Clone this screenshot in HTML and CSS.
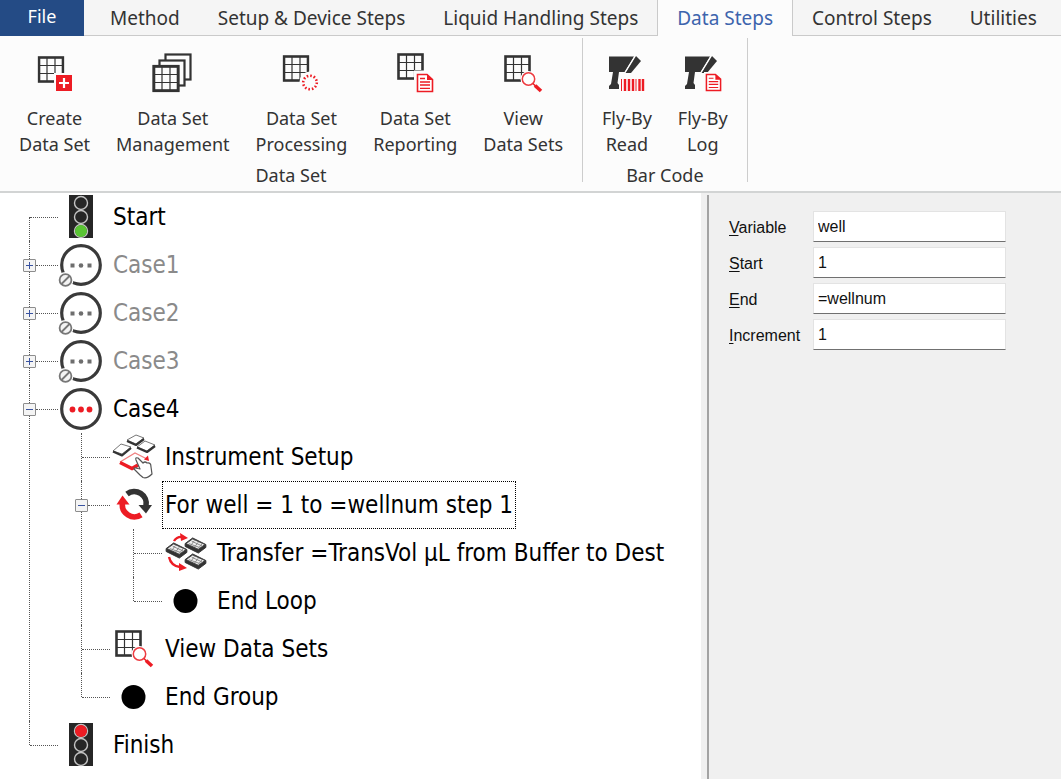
FILE: index.html
```html
<!DOCTYPE html>
<html lang="en">
<head>
<meta charset="utf-8">
<title>Method Editor</title>
<link rel="stylesheet" href="styles.css">
</head>
<body>
<svg class="sprite" aria-hidden="true">
  <defs>
    <symbol id="grid" viewBox="0 0 27 27">
      <path d="M9.500 2V25M17.500 2V25M2 9.500H25M2 17.500H25" fill="none" stroke="#333" stroke-width="1.200"/>
      <rect x="1.500" y="1.500" width="24" height="24" fill="none" stroke="#333" stroke-width="2.600"/>
    </symbol>
    <symbol id="doc" viewBox="0 0 18 20">
      <path d="M1.500 1.500H11L16.500 6.500V18.500H1.500Z" fill="#fff" stroke="#ed1c24" stroke-width="1.600"/>
      <path d="M11 1V7H17Z" fill="#ed1c24"/>
      <path d="M4 5.500H9M4 9H14M4 12H14M4 15.300H14" stroke="#ed1c24" stroke-width="1.300"/>
    </symbol>
    <symbol id="scanner" viewBox="0 0 44 44">
      <path d="M4 4.500H29L19.500 20H14L12.500 31L14 33V37H4V34L6 32L8 20H4Z" fill="#333"/>
      <path d="M31 4L36 9L26 21H20.500Z" fill="#333"/>
      <path d="M30 4L20 20.500" stroke="#fff" stroke-width="1"/>
    </symbol>
    <symbol id="view" viewBox="0 0 44 44">
      <use href="#grid" x="3" y="3" width="27" height="27"/>
      <circle cx="27.500" cy="27" r="8" fill="#fff"/>
      <circle cx="27.500" cy="27" r="6.200" fill="#fff" stroke="#ed3b40" stroke-width="1.500"/>
      <path d="M32 31.500L34.500 34" stroke="#ed1c24" stroke-width="1.500"/>
      <path d="M34 33.500L40 39" stroke="#ed1c24" stroke-width="3.600"/>
    </symbol>
    <symbol id="ring" viewBox="0 0 46 46">
      <circle cx="23" cy="23" r="19.300" fill="#fff" stroke="#3a3a3a" stroke-width="3.200"/>
    </symbol>
    <symbol id="case-off" viewBox="0 0 46 46">
      <use href="#ring" width="46" height="46"/>
      <g fill="#6e6e6e"><rect x="12.500" y="21.500" width="4" height="4"/><circle cx="23" cy="23.500" r="2.300"/><rect x="29.500" y="21.500" width="4" height="4"/></g>
      <circle cx="7.500" cy="38" r="8" fill="#fff"/>
      <circle cx="7.500" cy="38" r="5.900" fill="#f4f4f4" stroke="#777" stroke-width="1.800"/>
      <path d="M3.500 42L11.500 34" stroke="#777" stroke-width="1.800"/>
    </symbol>
    <symbol id="lamp" viewBox="0 0 46 46">
      <rect x="11" y="1" width="24" height="43" fill="#262626"/>
      <g fill="none" stroke="#c4c4c4" stroke-width="1.400"><circle cx="23" cy="9" r="6.500"/><circle cx="23" cy="23" r="6.500"/><circle cx="23" cy="37" r="6.500"/></g>
    </symbol>
    <symbol id="end" viewBox="0 0 46 46"><circle cx="23.500" cy="23" r="12" fill="#000"/></symbol>
    <symbol id="plate" viewBox="0 0 24 18">
      <path d="M1 7L9 1L23 8V11L15 17L1 10Z" fill="#333" stroke="#333" stroke-width="1"/>
      <path d="M2 7L9 2L22 8L15 13Z" fill="#eee" stroke="#444" stroke-width="1"/>
      <path d="M5 7L16 11M8 4.500L19 9.500M7 9L11 3.500M11 10.500L15 5.500M15 12L19 7" fill="none" stroke="#888" stroke-width="1"/>
    </symbol>
  </defs>
</svg>

<header class="ribbon">
  <nav class="tabs" aria-label="Ribbon">
    <button class="tab tab-file" type="button">File</button>
    <button class="tab" type="button">Method</button>
    <button class="tab" type="button">Setup &amp; Device Steps</button>
    <button class="tab" type="button">Liquid Handling Steps</button>
    <button class="tab tab-active" type="button" aria-current="page">Data Steps</button>
    <button class="tab" type="button">Control Steps</button>
    <button class="tab" type="button">Utilities</button>
    <span class="tabs-rest"></span>
  </nav>
  <div class="groups">
    <section class="group">
      <div class="tools">
        <button class="tool" type="button">
          <svg class="tool-icon" viewBox="0 0 44 44" aria-hidden="true">
            <use href="#grid" x="4.500" y="4" width="27" height="27"/>
            <rect x="21" y="21" width="20" height="20" fill="#fcfcfc"/>
            <rect x="23" y="23" width="16" height="16" fill="#ed1c24"/>
            <path d="M31 26V36M26 31H36" stroke="#fff" stroke-width="2.200"/>
          </svg>
          <span>Create<br>Data Set</span>
        </button>
        <button class="tool" type="button">
          <svg class="tool-icon" viewBox="0 0 44 44" aria-hidden="true">
            <g fill="#fcfcfc" stroke="#333" stroke-width="2.200"><rect x="14.500" y="2.500" width="25" height="25"/><rect x="8.500" y="8.500" width="25" height="25"/><rect x="2.500" y="14" width="25" height="25"/></g>
            <use href="#grid" x="1.500" y="13" width="27" height="27"/>
          </svg>
          <span>Data Set<br>Management</span>
        </button>
        <button class="tool" type="button">
          <svg class="tool-icon" viewBox="0 0 44 44" aria-hidden="true">
            <use href="#grid" x="3.500" y="3" width="27" height="27"/>
            <circle cx="31" cy="30" r="10.500" fill="#fcfcfc"/>
            <circle cx="31" cy="30.500" r="6.800" fill="none" stroke="#ed1c24" stroke-width="2.600" stroke-dasharray="1.600 1.960"/>
          </svg>
          <span>Data Set<br>Processing</span>
        </button>
        <button class="tool" type="button">
          <svg class="tool-icon" viewBox="0 0 44 44" aria-hidden="true">
            <use href="#grid" x="4" y="1" width="27" height="27"/>
            <rect x="21" y="18.500" width="14" height="14" fill="#fcfcfc"/>
            <use href="#doc" x="23" y="21" width="18" height="20"/>
          </svg>
          <span>Data Set<br>Reporting</span>
        </button>
        <button class="tool" type="button">
          <svg class="tool-icon" aria-hidden="true"><use href="#view"/></svg>
          <span>View<br>Data Sets</span>
        </button>
      </div>
      <h2 class="group-title">Data Set</h2>
    </section>
    <section class="group">
      <div class="tools">
        <button class="tool" type="button">
          <svg class="tool-icon" viewBox="0 0 44 44" aria-hidden="true">
            <use href="#scanner" width="44" height="44"/>
            <path d="M16.500 27V39M31 27V39" stroke="#ed1c24" stroke-width="1"/>
            <path d="M20 27V39M24 27V39M28 27V39M34.500 27V39M38 27V39" stroke="#ed1c24" stroke-width="2.400"/>
          </svg>
          <span>Fly-By<br>Read</span>
        </button>
        <button class="tool" type="button">
          <svg class="tool-icon" viewBox="0 0 44 44" aria-hidden="true">
            <use href="#scanner" width="44" height="44"/>
            <rect x="23" y="20" width="19" height="21" fill="#fcfcfc"/>
            <use href="#doc" x="24" y="21" width="17" height="19"/>
          </svg>
          <span>Fly-By<br>Log</span>
        </button>
      </div>
      <h2 class="group-title">Bar Code</h2>
    </section>
  </div>
</header>

<main class="workspace">
  <section class="tree-pane" aria-label="Method steps">
    <ul class="tree">
      <li class="node">
        <div class="row"><span class="gutter"></span>
          <svg class="step-icon" viewBox="0 0 46 46" aria-hidden="true"><use href="#lamp"/><circle cx="23" cy="37" r="6" fill="#5ac534"/></svg>
          <span class="label">Start</span></div>
      </li>
      <li class="node">
        <div class="row"><span class="gutter"><button class="toggle toggle-plus" type="button" aria-label="Expand Case1"></button></span>
          <svg class="step-icon" aria-hidden="true"><use href="#case-off"/></svg>
          <span class="label label-off">Case1</span></div>
      </li>
      <li class="node">
        <div class="row"><span class="gutter"><button class="toggle toggle-plus" type="button" aria-label="Expand Case2"></button></span>
          <svg class="step-icon" aria-hidden="true"><use href="#case-off"/></svg>
          <span class="label label-off">Case2</span></div>
      </li>
      <li class="node">
        <div class="row"><span class="gutter"><button class="toggle toggle-plus" type="button" aria-label="Expand Case3"></button></span>
          <svg class="step-icon" aria-hidden="true"><use href="#case-off"/></svg>
          <span class="label label-off">Case3</span></div>
      </li>
      <li class="node">
        <div class="row"><span class="gutter"><button class="toggle" type="button" aria-label="Collapse Case4"></button></span>
          <svg class="step-icon" viewBox="0 0 46 46" aria-hidden="true"><use href="#ring"/><g fill="#ed1c24"><circle cx="14.500" cy="23.500" r="2.900"/><circle cx="23" cy="23.500" r="2.900"/><circle cx="31.500" cy="23.500" r="2.900"/></g></svg>
          <span class="label">Case4</span></div>
        <ul class="subtree">
          <li class="node">
            <div class="row"><span class="gutter"></span>
              <svg class="step-icon" viewBox="0 0 46 46" aria-hidden="true">
                <g fill="#fff" stroke="#777" stroke-width="1" stroke-linejoin="round">
                  <path d="M3 17L11 10L21 13L12 20Z"/><path d="M17 6L26 1L34 4L26 10Z"/><path d="M27 13L35 7L45 11L37 17Z"/>
                </g>
                <g fill="none" stroke="#333" stroke-width="2.200" stroke-linejoin="round">
                  <path d="M3 17.500L12 21.500L21 14"/><path d="M17 7L26 11L34 5"/><path d="M27 13.500L37 18L45 12"/>
                </g>
                <path d="M10 28L25 19L37 25" fill="none" stroke="#f08080" stroke-width="1.200"/>
                <path d="M34 25.500L38 21.500L39 27Z" fill="#ed1c24"/>
                <path d="M10 28.500L22 34.500L28 31" fill="none" stroke="#ed1c24" stroke-width="3.600"/>
                <path d="M30 41L24 35Q24 33 28 34.500L30 35L26 26Q25 23 28 24L33 29Q35 27 37 29Q41 28 41 33L42 40Q37 45 33 43.500Z" fill="#fff" stroke="#555" stroke-width="1.200" stroke-linejoin="round"/>
              </svg>
              <span class="label">Instrument Setup</span></div>
          </li>
          <li class="node">
            <div class="row"><span class="gutter"><button class="toggle" type="button" aria-label="Collapse loop"></button></span>
              <svg class="step-icon" viewBox="0 0 46 46" aria-hidden="true">
                <path d="M17 12A12 12 0 0 1 36 24" fill="none" stroke="#333" stroke-width="5.600"/>
                <path d="M28.500 23H42L36 31.500Z" fill="#333"/>
                <path d="M31 32.800A12 12 0 0 1 12.500 21" fill="none" stroke="#ed1c24" stroke-width="5.600"/>
                <path d="M6.500 22.500H19.500L12.500 13.500Z" fill="#ed1c24"/>
              </svg>
              <span class="label label-focus">For well = 1 to =wellnum step 1</span></div>
            <ul class="subtree">
              <li class="node">
                <div class="row"><span class="gutter"></span>
                  <svg class="step-icon" viewBox="0 0 46 46" aria-hidden="true">
                    <use href="#plate" x="3" y="12" width="23" height="17"/><use href="#plate" x="22" y="7" width="23" height="17"/><use href="#plate" x="22" y="23" width="23" height="17"/>
                    <path d="M12 11Q15 6 21 7M7 27Q9 36 18 37" fill="none" stroke="#ed1c24" stroke-width="2.400"/>
                    <path d="M18 3L26 8L19 11ZM17 33L25 38L17 41Z" fill="#ed1c24"/>
                  </svg>
                  <span class="label">Transfer =TransVol µL from Buffer to Dest</span></div>
              </li>
              <li class="node">
                <div class="row"><span class="gutter"></span><svg class="step-icon" aria-hidden="true"><use href="#end"/></svg>
                  <span class="label">End Loop</span></div>
              </li>
            </ul>
          </li>
          <li class="node">
            <div class="row"><span class="gutter"></span>
              <svg class="step-icon" viewBox="0 0 46 46" aria-hidden="true"><use href="#view" x="2" y="1" width="44" height="44"/></svg>
              <span class="label">View Data Sets</span></div>
          </li>
          <li class="node">
            <div class="row"><span class="gutter"></span><svg class="step-icon" aria-hidden="true"><use href="#end"/></svg>
              <span class="label">End Group</span></div>
          </li>
        </ul>
      </li>
      <li class="node">
        <div class="row"><span class="gutter"></span>
          <svg class="step-icon" viewBox="0 0 46 46" aria-hidden="true"><use href="#lamp"/><circle cx="23" cy="9" r="6" fill="#ed1c24"/></svg>
          <span class="label">Finish</span></div>
      </li>
    </ul>
  </section>
  <aside class="side">
    <form class="fields">
      <label for="variable"><u>V</u>ariable</label><input id="variable" type="text" value="well">
      <label for="start"><u>S</u>tart</label><input id="start" type="text" value="1">
      <label for="end-value"><u>E</u>nd</label><input id="end-value" type="text" value="=wellnum">
      <label for="increment"><u>I</u>ncrement</label><input id="increment" type="text" value="1">
    </form>
  </aside>
</main>
</body>
</html>
```
FILE: styles.css
```css
* { box-sizing: border-box; }

body {
  margin: 0;
  min-height: 100vh;
  display: flex;
  flex-direction: column;
  background: #fff;
  color: #333;
  font-family: "Noto Sans", "Noto Sans CJK SC", sans-serif;
  font-size: 18px;
}

button {
  margin: 0;
  padding: 0;
  border: 0;
  background: none;
  color: inherit;
  font: inherit;
}

.sprite { position: absolute; width: 0; height: 0; }

/* Ribbon */
.ribbon {
  background: #fcfcfc;
  border-bottom: 2px solid #d2d4d4;
}

.tabs {
  display: flex;
  height: 36px;
  font-size: 19px;
}

.tab {
  padding: 0 19px;
  background: #f5f5f5;
  border-bottom: 1px solid #cacaca;
  line-height: 34px;
  white-space: nowrap;
}

.tab-file {
  width: 84px;
  background: #244b85;
  border-bottom: 0;
  color: #fff;
  font-size: 18px;
  line-height: 30px;
  padding-bottom: 4px;
}

.tab-file + .tab { padding-left: 26px; }

.tab-active {
  background: #fcfcfc;
  border: 1px solid #cacaca;
  border-width: 0 1px;
  color: #3d64ad;
}

.tabs-rest {
  flex: 1;
  background: #f5f5f5;
  border-bottom: 1px solid #cacaca;
}

.groups {
  display: flex;
  padding: 2px 0 9px;
}

.group {
  padding: 14px 6px 0;
  border-right: 1px solid #cdcdcd;
  text-align: center;
}

.tools { display: flex; }

.tool {
  display: flex;
  flex-direction: column;
  align-items: center;
  gap: 9px;
  padding: 0 13px;
  line-height: 26px;
}

.tool-icon { width: 44px; height: 44px; }

.group-title {
  margin: 11px 0 0;
  font-size: 18px;
  font-weight: 400;
  line-height: 14px;
}

/* Workspace */
.workspace {
  flex: 1;
  display: flex;
}

.tree-pane { flex: 1; min-width: 0; }

.tree,
.subtree {
  margin: 0;
  padding: 0;
  list-style: none;
}

.subtree { margin-left: 52px; }

.node { position: relative; }

.node::before {
  content: "";
  position: absolute;
  top: 0;
  bottom: 0;
  left: 29px;
  border-left: 1px dotted #555;
}

.tree > .node:first-child::before { top: 24px; }

.node:last-child::before {
  bottom: auto;
  height: 24px;
}

.row {
  position: relative;
  display: flex;
  align-items: center;
  height: 48px;
}

.gutter {
  display: flex;
  align-items: center;
  width: 58px;
  padding-left: 23px;
}

.gutter::after {
  content: "";
  flex: 1;
  border-top: 1px dotted #555;
}

.gutter:empty { padding-left: 30px; }

.toggle {
  width: 13px;
  height: 13px;
  border: 1px solid #8d8d8d;
  border-radius: 1px;
  background: linear-gradient(#3953a0, #3953a0) center / 7px 1px no-repeat, #f4f4f4;
}

.toggle-plus {
  background:
    linear-gradient(#3953a0, #3953a0) center / 7px 1px no-repeat,
    linear-gradient(#3953a0, #3953a0) center / 1px 7px no-repeat,
    #f4f4f4;
}

.step-icon {
  width: 46px;
  height: 46px;
  flex: none;
}

.label {
  margin-left: 6px;
  padding: 0 3px;
  color: #000;
  font-family: "DejaVu Sans Condensed", "DejaVu Sans", sans-serif;
  font-size: 24px;
  line-height: 46px;
  white-space: nowrap;
}

.label-off { color: #8a8a8a; }

.label-focus { border: 1px dotted #000; padding: 0 2px; }

.side {
  width: 360px;
  padding: 2px 0 0 6px;
  background: #f0f0f0;
}

.fields {
  height: 100%;
  display: grid;
  grid-template-columns: 84px 193px;
  grid-auto-rows: 31px;
  align-content: start;
  row-gap: 5px;
  padding: 16px 0 0 20px;
  border-left: 2px solid #a3a3a3;
  color: #111;
  font: 16px/32px "Liberation Sans", Arial, sans-serif;
}

.fields label { padding-top: 1px; }

.fields u { text-underline-offset: 2px; }

.fields input {
  min-width: 0;
  padding: 0 4px;
  border: 1px solid #e3e3e3;
  border-bottom-color: #707070;
  background: #fff;
  color: #111;
  font: inherit;
}
```
